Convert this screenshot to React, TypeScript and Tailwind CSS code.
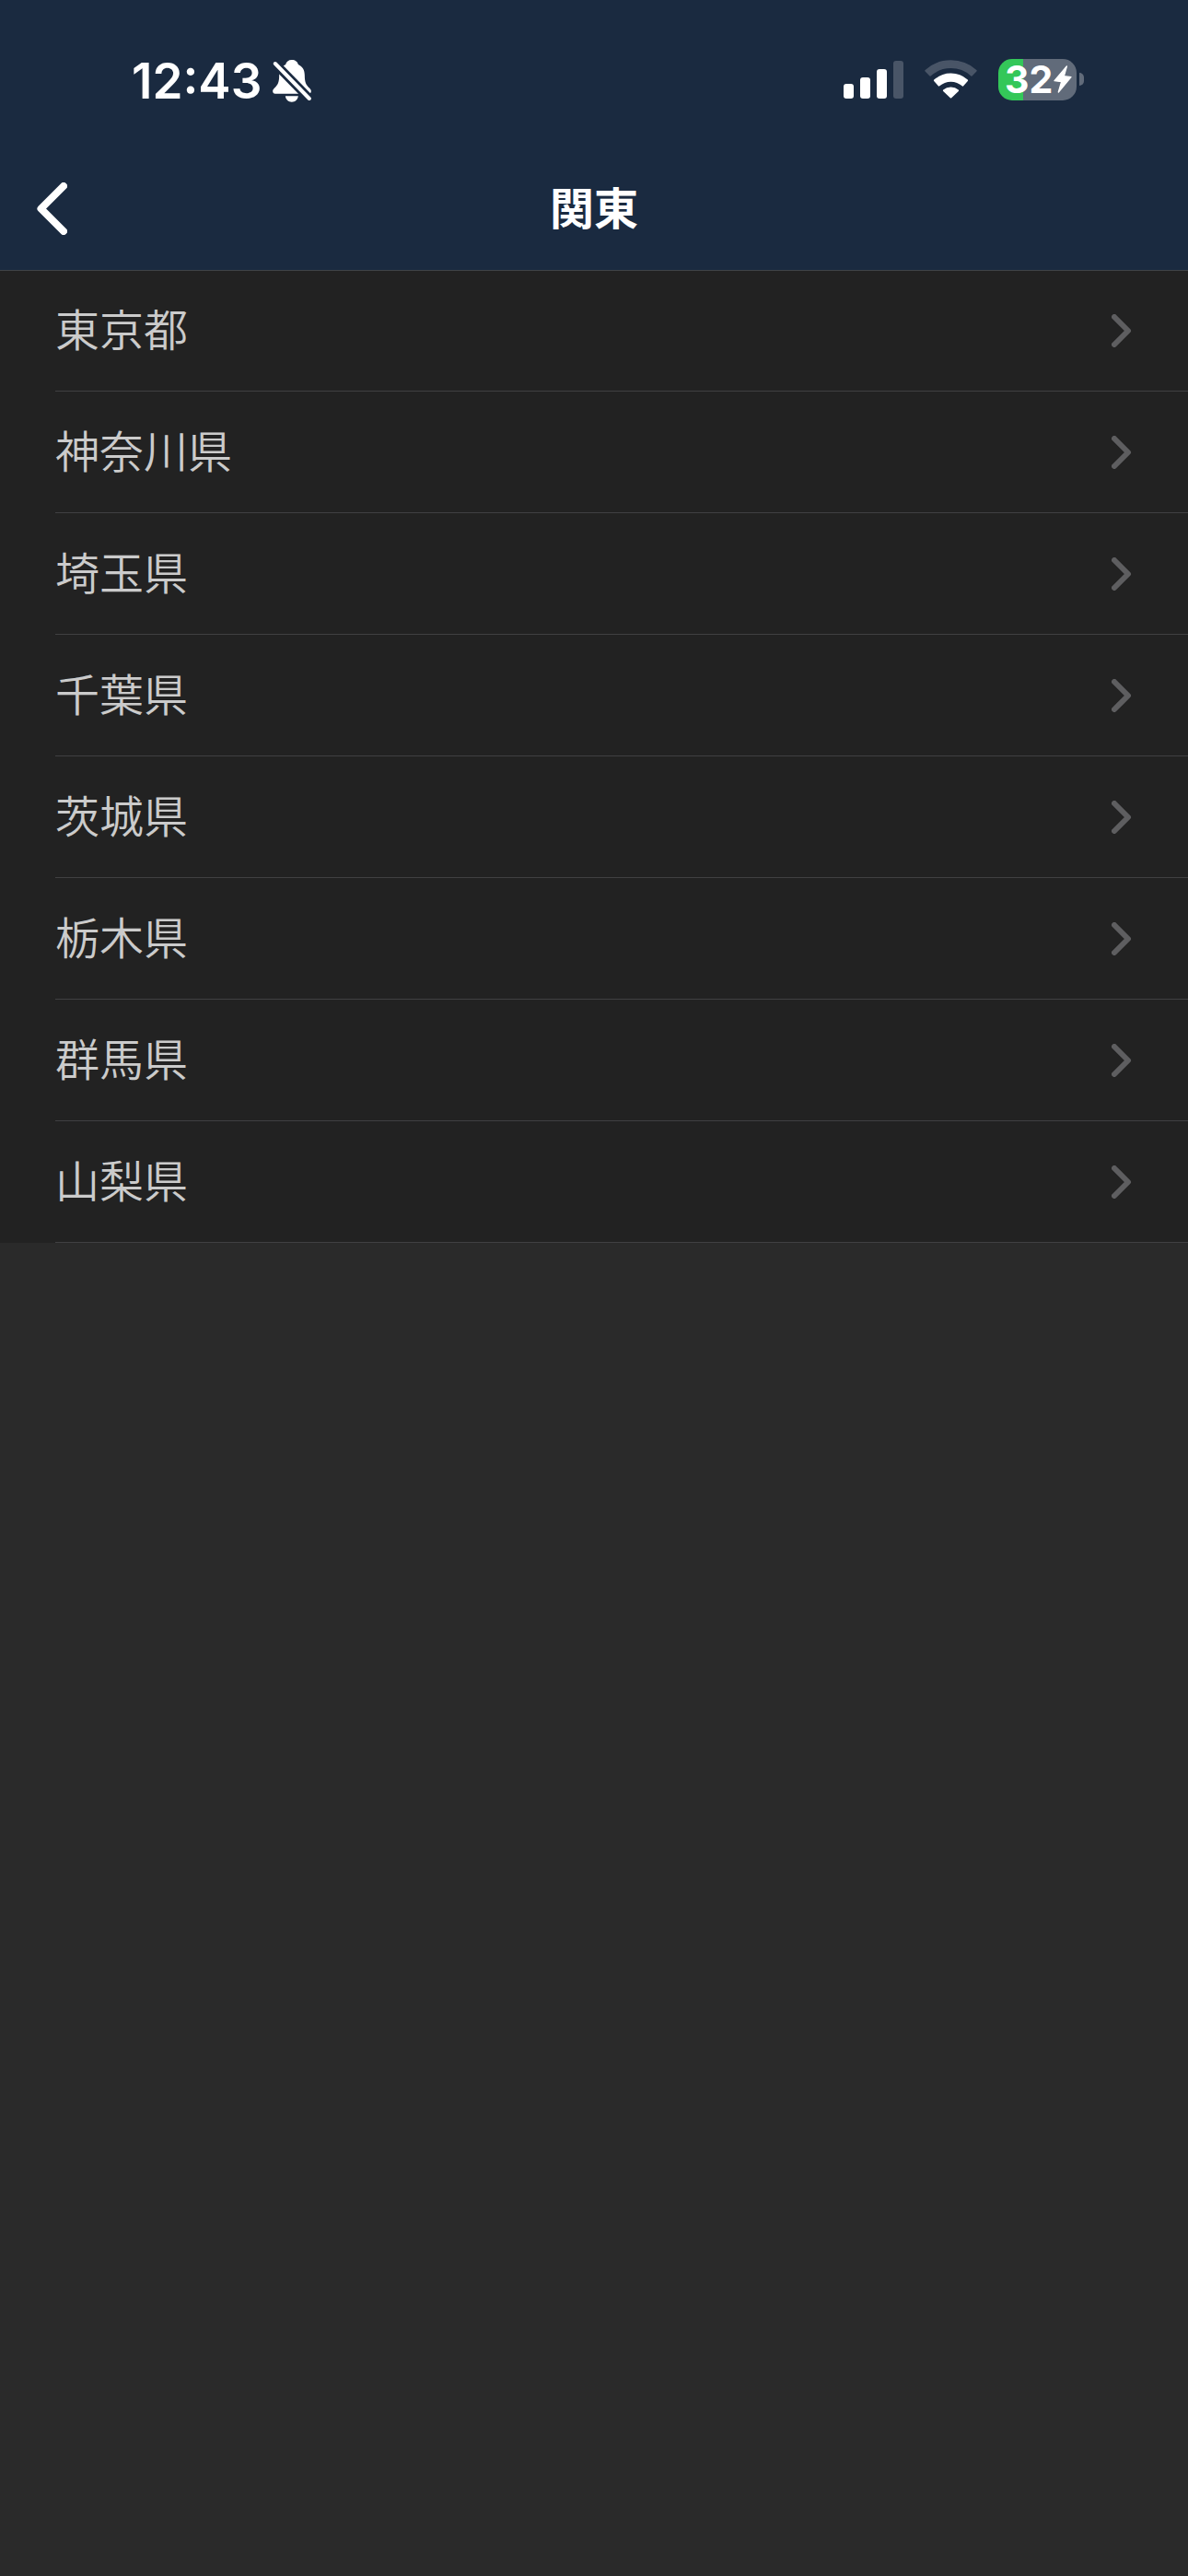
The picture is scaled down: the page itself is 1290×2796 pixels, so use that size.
import React from 'react';

const prefectures = ['東京都', '神奈川県', '埼玉県', '千葉県', '茨城県', '栃木県', '群馬県', '山梨県'];

const BellOffIcon: React.FC = () => (
  <svg className="w-[42px] h-[46px]" viewBox="0 0 125 138" fill="none" aria-hidden="true">
    <path
      fill="#fff"
      d="M62 0c11 0 19 6 21 15 14 7 21 18 21 35 0 22 4 31 16 42 4 4 5 7 5 10 0 5-3 8-8 8H8c-5 0-8-3-8-8 0-4 1-6 5-10 12-11 16-20 16-42 0-17 7-28 21-35 2-9 9-15 20-15z"
    />
    <path fill="#fff" d="M41 118h42c-2 12-10 19-21 19s-19-7-21-19z" />
    <path stroke="#1a2a40" strokeWidth="29" d="M-10 -6L122 129" />
    <path stroke="#fff" strokeWidth="12" strokeLinecap="round" d="M8 12L119 126" />
  </svg>
);

const SignalIcon: React.FC = () => (
  <svg className="w-[65px] h-[45px]" viewBox="0 0 65 45" fill="#fff" aria-hidden="true">
    <rect x="0" y="27" width="11" height="16" rx="3" />
    <rect x="18" y="20" width="11" height="23" rx="3" />
    <rect x="36" y="11" width="11" height="32" rx="3" />
    <rect x="54" y="2" width="11" height="41" rx="3" fill="#495567" />
  </svg>
);

const WifiIcon: React.FC = () => (
  <svg className="w-[57px] h-[42px]" viewBox="0 0 172 126" strokeWidth="6" strokeLinejoin="round" aria-hidden="true">
    <path fill="#495567" stroke="#495567" d="M4 35A123 123 0 0 1 168 35L154 50A102 102 0 0 0 18 50Z" />
    <path fill="#fff" stroke="#fff" d="M33 67A79 79 0 0 1 139 67L125 83A58 58 0 0 0 47 83Z" />
    <path fill="#fff" stroke="#fff" d="M63 100A35 35 0 0 1 109 100L86 122Z" />
  </svg>
);

const Battery: React.FC = () => (
  <div className="flex items-center gap-[3px]">
    <div className="flex items-center w-[85px] h-[45px] pl-[7px] rounded-[15px] bg-linear-to-r from-[#34c759] from-[27px] to-[#616b7a] to-[27px]">
      <span className="w-[53px] text-[41px] leading-none font-bold">32</span>
      <svg className="w-5 h-[30px]" viewBox="0 0 60 90" fill="#fff" stroke="#fff" strokeWidth="4" strokeLinejoin="round" aria-hidden="true">
        <path d="M43 3L3 50L26 53L16 87L57 38L34 35Z" />
      </svg>
    </div>
    <div className="w-[5px] h-[14px] rounded-r-full bg-[#616b7a]" />
  </div>
);

const StatusBar: React.FC = () => (
  <div className="flex items-center justify-between h-40 pt-3 pl-[143px] pr-[113px] text-white font-[Inter,sans-serif]">
    <div className="flex items-center gap-3 pt-1">
      <span className="text-[53px] leading-none font-semibold">12:43</span>
      <BellOffIcon />
    </div>
    <div className="flex items-center gap-[23px]">
      <SignalIcon />
      <WifiIcon />
      <Battery />
    </div>
  </div>
);

export default function App() {
  return (
    <div className="min-h-screen bg-[#2a2a2a] font-['Noto_Sans_CJK_JP',sans-serif]">
      <header className="relative z-10 bg-[#1a2a40] border-b border-[#404347]">
        <StatusBar />
        <div className="grid grid-cols-[1fr_auto_1fr] items-center h-[133px] px-10">
          <button type="button" aria-label="戻る" className="justify-self-start">
            <svg className="w-[33px] h-[57px]" viewBox="0 0 33 57" fill="none" stroke="#fff" strokeWidth="8" strokeLinecap="round" strokeLinejoin="round" aria-hidden="true">
              <path d="M29 4L4.5 28.5L29 53" />
            </svg>
          </button>
          <h1 className="pb-2 text-5xl leading-none font-bold text-white">関東</h1>
        </div>
      </header>

      {/* first row tucks under the header's bottom line */}
      <ul className="-mt-px bg-[#222222]">
        {prefectures.map((name) => (
          <li key={name}>
            <a href="#" className="flex h-[132px] pl-15 text-[#cbcbcb]">
              <span className="flex flex-1 items-center justify-between pr-[61px] border-b border-[#404042]">
                <span className="pb-2 text-5xl leading-none font-[350]">{name}</span>
                <svg className="w-[22px] h-9" viewBox="0 0 22 36" fill="none" stroke="#5e5e60" strokeWidth="6" strokeLinecap="round" strokeLinejoin="round" aria-hidden="true">
                  <path d="M3 3L18 18L3 33" />
                </svg>
              </span>
            </a>
          </li>
        ))}
      </ul>
    </div>
  );
}
